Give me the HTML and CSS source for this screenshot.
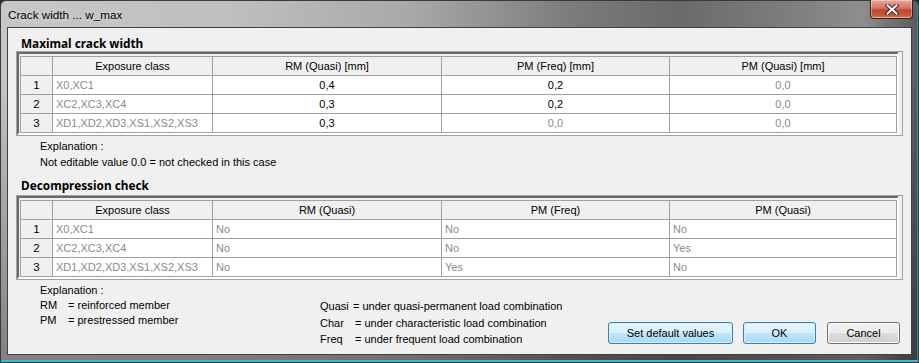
FILE: index.html
```html
<!DOCTYPE html>
<html lang="en">
<head>
<meta charset="utf-8">
<title>Crack width ... w_max</title>
<link rel="stylesheet" href="styles.css">
</head>
<body>
<div class="window">
  <div class="titlebar">
    <span class="title">Crack width ... w_max</span>
    <button class="close" aria-label="Close">
      <svg width="14" height="11" viewBox="0 0 14 11">
        <path d="M2.5 1.5 L11.5 9.5 M11.5 1.5 L2.5 9.5" stroke="#3a2a28" stroke-width="4" stroke-linecap="square"/>
        <path d="M2.5 1.5 L11.5 9.5 M11.5 1.5 L2.5 9.5" stroke="#ffffff" stroke-width="2" stroke-linecap="square"/>
      </svg>
    </button>
  </div>
  <div class="client">
    <h2 class="section-title first">Maximal crack width</h2>
    <div class="grid-frame">
      <div class="grid-well">
        <table class="grid grid-center">
          <colgroup>
            <col class="c-num"><col class="c-cls"><col class="c-rm"><col class="c-pf"><col class="c-pq">
          </colgroup>
          <thead>
            <tr><th class="num"></th><th>Exposure class</th><th>RM (Quasi) [mm]</th><th>PM (Freq) [mm]</th><th>PM (Quasi) [mm]</th></tr>
          </thead>
          <tbody>
            <tr><td class="num">1</td><td class="cls">X0,XC1</td><td>0,4</td><td>0,2</td><td class="dis">0,0</td></tr>
            <tr><td class="num">2</td><td class="cls">XC2,XC3,XC4</td><td>0,3</td><td>0,2</td><td class="dis">0,0</td></tr>
            <tr><td class="num">3</td><td class="cls">XD1,XD2,XD3,XS1,XS2,XS3</td><td>0,3</td><td class="dis">0,0</td><td class="dis">0,0</td></tr>
          </tbody>
        </table>
      </div>
    </div>
    <div class="note">
      <p>Explanation :</p>
      <p>Not editable value 0.0 = not checked in this case</p>
    </div>
    <h2 class="section-title second">Decompression check</h2>
    <div class="grid-frame">
      <div class="grid-well">
        <table class="grid grid-left">
          <colgroup>
            <col class="c-num"><col class="c-cls"><col class="c-rm"><col class="c-pf"><col class="c-pq">
          </colgroup>
          <thead>
            <tr><th class="num"></th><th>Exposure class</th><th>RM (Quasi)</th><th>PM (Freq)</th><th>PM (Quasi)</th></tr>
          </thead>
          <tbody>
            <tr><td class="num">1</td><td class="cls">X0,XC1</td><td class="dis">No</td><td class="dis">No</td><td class="dis">No</td></tr>
            <tr><td class="num">2</td><td class="cls">XC2,XC3,XC4</td><td class="dis">No</td><td class="dis">No</td><td class="dis">Yes</td></tr>
            <tr><td class="num">3</td><td class="cls">XD1,XD2,XD3,XS1,XS2,XS3</td><td class="dis">No</td><td class="dis">Yes</td><td class="dis">No</td></tr>
          </tbody>
        </table>
      </div>
    </div>
    <div class="footer">
      <div class="legend">
        <p class="legend-head">Explanation :</p>
        <div class="legend-cols">
          <dl class="abbr members">
            <dt>RM</dt><dd>= reinforced member</dd>
            <dt>PM</dt><dd>= prestressed member</dd>
          </dl>
          <dl class="abbr loads">
            <dt>Quasi</dt><dd class="tight">= under quasi-permanent load combination</dd>
            <dt>Char</dt><dd>= under characteristic load combination</dd>
            <dt>Freq</dt><dd>= under frequent load combination</dd>
          </dl>
        </div>
      </div>
      <div class="buttons">
        <button class="btn btn-blue btn-wide">Set default values</button>
        <button class="btn btn-blue">OK</button>
        <button class="btn">Cancel</button>
      </div>
    </div>
  </div>
</div>
</body>
</html>
```

FILE: styles.css
```css
* { box-sizing: border-box; }

html, body {
  margin: 0;
  padding: 0;
  width: 919px;
  height: 363px;
  overflow: hidden;
  background: #2b2b2b;
}

.window {
  width: 919px;
  height: 363px;
  display: flex;
  flex-direction: column;
  padding: 0 6px 7px 6px;
  border: 1px solid #3a3a3a;
  border-radius: 6px 6px 0 0;
  background:
    linear-gradient(to bottom, rgba(0,0,0,0) 0%, rgba(0,0,0,0) 20%, rgba(0,0,0,0.35) 100%),
    linear-gradient(to right, #c6c6c6 0%, #bfbfbf 25%, #a8a8a8 45%, #7c7c7c 62%, #6a6a6a 74%, #7e7e7e 86%, #8e8e8e 94%, #5a5a5a 100%);
  box-shadow: inset 0 -2px 0 #39b6d8, inset -1px 0 0 #2a8fb0;
  font-family: "Liberation Sans", Arial, sans-serif;
}

.titlebar {
  height: 26px;
  flex: none;
  display: flex;
  align-items: flex-start;
  justify-content: space-between;
}

.title {
  margin: 6px 0 0 1px;
  font-size: 11.7px;
  line-height: 16px;
  color: #000;
  text-shadow: 0 0 6px rgba(255,255,255,0.8);
}

.close {
  width: 43px;
  height: 19px;
  margin: -1px -1px 0 0;
  padding: 0;
  border: 1px solid #3b2320;
  border-top: none;
  border-radius: 0 0 4px 4px;
  background: linear-gradient(to bottom, #e8a99c 0%, #d9725f 45%, #c24a35 55%, #c6563b 85%, #d88266 100%);
  box-shadow: inset 0 0 0 1px rgba(255,255,255,0.35);
  display: flex;
  align-items: center;
  justify-content: center;
}

.client {
  flex: 1;
  border: 1px solid #404040;
  background: #f0f0f0;
  display: flex;
  flex-direction: column;
  padding: 0 8px;
}

.section-title {
  margin: 0;
  padding-left: 5px;
  font-family: "Noto Sans", "Liberation Sans", sans-serif;
  font-weight: bold;
  font-size: 11.8px;
  line-height: 16px;
  color: #000;
}
.section-title.first { padding-top: 7px; height: 23px; }
.section-title.second { padding-top: 7px; height: 25px; }

.grid-frame {
  border: 1px solid #a0a0a0;
  background: #f0f0f0;
  padding: 0 3px 0 0;
}

.grid-well {
  border-style: solid;
  border-width: 2px;
  border-color: #696969 #ffffff #ffffff #696969;
  padding: 2px 0 0 1px;
}

.grid {
  border-collapse: separate;
  border-spacing: 0;
  table-layout: fixed;
  width: 877px;
  border-left: 1px solid #a0a0a0;
  border-top: 1px solid #a0a0a0;
  font-family: "Liberation Sans", Arial, sans-serif;
  font-size: 11px;
}

.c-num { width: 32px; }
.c-cls { width: 160px; }
.c-rm { width: 229px; }
.c-pf { width: 228px; }
.c-pq { width: 227px; }

.grid th, .grid td {
  padding: 0 3px;
  height: 19px;
  line-height: 18px;
  border-right: 1px solid #a0a0a0;
  border-bottom: 1px solid #a0a0a0;
  white-space: nowrap;
  overflow: hidden;
  font-weight: normal;
}

.grid th {
  background: #f0f0f0;
  color: #000;
  text-align: center;
}

.grid td { background: #fff; color: #000; }
.grid td.num { background: #f0f0f0; color: #000; text-align: center; font-size: 11.5px; }
.grid td.cls { color: #8a8a8a; text-align: left; }
.grid-center td { text-align: center; }
.grid-left td { text-align: left; }
.grid td.dis { color: #8a8a8a; }

.note {
  padding: 2px 0 0 24px;
  height: 34px;
  font-size: 11px;
  line-height: 16px;
  color: #000;
}
.note p { margin: 0; }

.footer {
  flex: 1;
  display: flex;
  justify-content: space-between;
  align-items: flex-start;
  font-size: 11px;
  color: #000;
}

.legend { padding: 3px 0 0 24px; }
.legend-head { margin: 0; line-height: 15px; }

.legend-cols { display: flex; align-items: flex-start; }

.abbr {
  margin: 0;
  display: grid;
  align-content: start;
}
.abbr dt, .abbr dd { margin: 0; }

.members {
  width: 280px;
  grid-template-columns: 28px auto;
  line-height: 15px;
}
.loads {
  grid-template-columns: 35px auto;
  line-height: 16.5px;
}
.loads dd.tight { margin-left: -2px; }

.buttons {
  display: flex;
  gap: 10px;
  margin: 42px 3px 0 0;
}

.btn {
  width: 73px;
  height: 22px;
  padding: 0;
  border: 1px solid #707070;
  border-radius: 3px;
  font-family: "Liberation Sans", Arial, sans-serif;
  font-size: 11px;
  color: #000;
  background: linear-gradient(to bottom, #f2f2f2 0%, #ebebeb 50%, #dddddd 51%, #cfcfcf 100%);
  box-shadow: inset 0 0 0 1px #fcfcfc;
}
.btn + .btn:last-child { margin-left: 1px; }
.btn-wide { width: 125px; }
.btn-blue {
  border-color: #3c7fb1;
  background: linear-gradient(to bottom, #eaf6fd 0%, #d9f0fc 50%, #bee6fd 51%, #a7d9f5 100%);
  box-shadow: inset 0 0 0 1px #d5eefb;
}
```
